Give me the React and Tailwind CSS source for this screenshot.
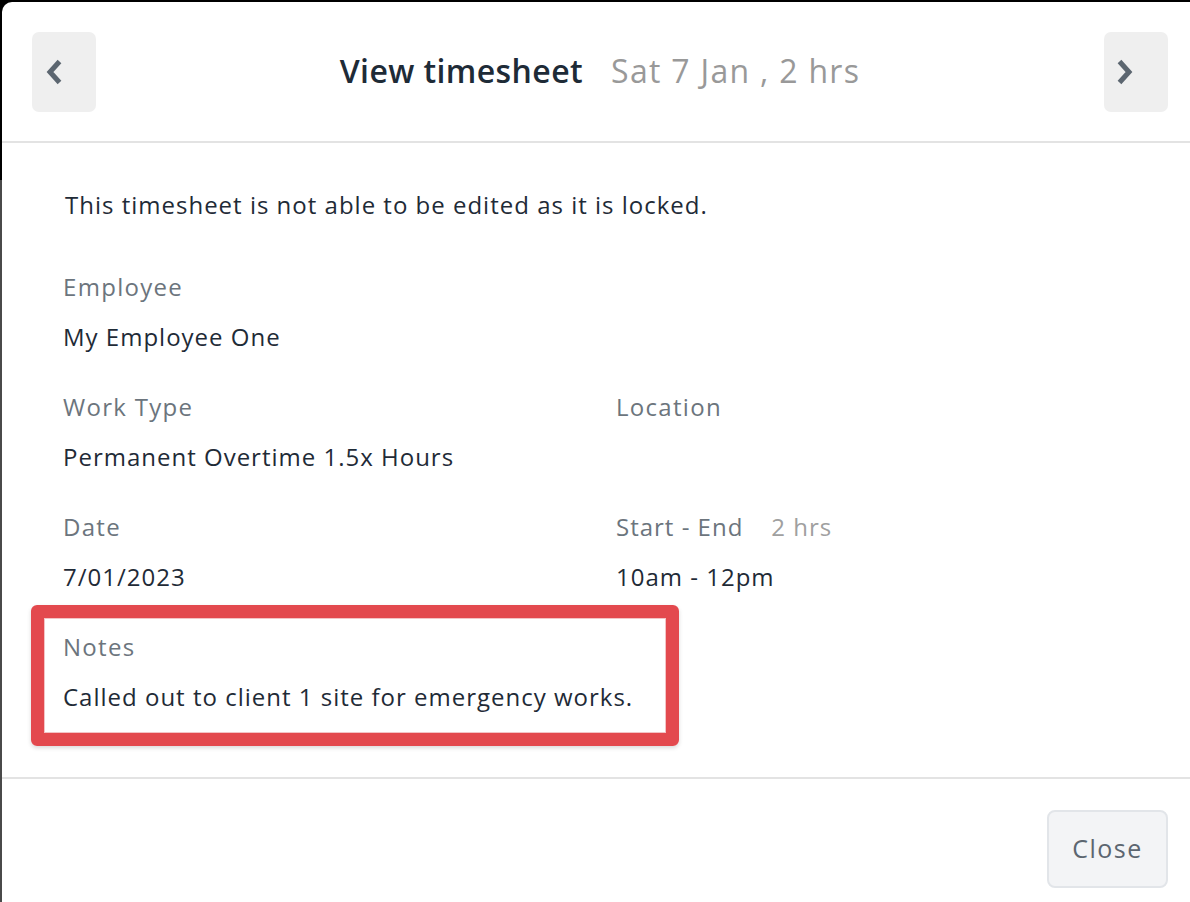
export default function App() {
  const font = { fontFamily: '"Open Sans", Lato, sans-serif' };
  return (
    <div className="w-[1190px] h-[902px] bg-black flex overflow-hidden" style={font}>
      <div className="w-[2px] flex flex-col shrink-0">
        <div className="h-[180px] bg-black" />
        <div className="flex-1 bg-[#4a4a4a]" />
      </div>
      <div className="flex-1 mt-[2px] bg-white rounded-tl-[10px] flex flex-col">
        {/* Header */}
        <div className="h-[141px] flex items-start justify-between pt-[30px] pl-[30px] pr-[22px] border-b-2 border-[#e3e3e3]">
          <button className="w-[64px] h-[80px] bg-[#efefef] rounded-[7px] flex items-center pl-[12px]">
            <svg width="20" height="28" viewBox="0 0 20 28">
              <path d="M15.5 3.5 L6 14 L15.5 24.5" fill="none" stroke="#5c6670" strokeWidth="5" strokeLinejoin="miter" strokeLinecap="butt" />
            </svg>
          </button>
          <div className="flex gap-[28px] h-[80px] items-center pb-[2px]">
            <span className="text-[32px] font-semibold text-[#1e2b37] leading-none tracking-[0.4px]">View timesheet</span>
            <span className="text-[32px] text-[#999999] leading-none tracking-[1.3px]">Sat 7 Jan , 2 hrs</span>
          </div>
          <button className="w-[64px] h-[80px] bg-[#efefef] rounded-[7px] flex items-center pl-[11px]">
            <svg width="20" height="28" viewBox="0 0 20 28">
              <path d="M4.5 3.5 L14 14 L4.5 24.5" fill="none" stroke="#5c6670" strokeWidth="5" strokeLinejoin="miter" strokeLinecap="butt" />
            </svg>
          </button>
        </div>
        {/* Body */}
        <div className="pt-[47px] pl-[61px] pb-[65px] text-[24px] leading-[30px] tracking-[1px]">
          <p className="pl-[2px] text-[#1f2b37]">This timesheet is not able to be edited as it is locked.</p>
          <div className="mt-[52px] grid grid-cols-[553px_1fr] gap-y-[40px]">
            <div className="col-span-2">
              <div className="text-[#6c757d] tracking-[1.3px]">Employee</div>
              <div className="mt-[20px] text-[#1f2b37]">My Employee One</div>
            </div>
            <div>
              <div className="text-[#6c757d] tracking-[1.3px]">Work Type</div>
              <div className="mt-[20px] text-[#1f2b37]">Permanent Overtime 1.5x Hours</div>
            </div>
            <div>
              <div className="text-[#6c757d] tracking-[1.3px]">Location</div>
            </div>
            <div>
              <div className="text-[#6c757d] tracking-[1.3px]">Date</div>
              <div className="mt-[20px] text-[#1f2b37]">7/01/2023</div>
            </div>
            <div>
              <div className="text-[#6c757d] flex gap-[28px]">
                <span>Start - End</span>
                <span className="text-[#a0a0a0]">2 hrs</span>
              </div>
              <div className="mt-[20px] text-[#1f2b37]">10am - 12pm</div>
            </div>
            <div className="col-span-2 relative">
              <div className="absolute left-[-32px] top-[-27px] w-[648px] h-[141px] border-[13px] border-[#e3494e] rounded-[6px] shadow-[0_2px_4px_rgba(0,0,0,0.15)]">
                <div className="w-full h-full border border-[#f3c4c6]" />
              </div>
              <div className="relative text-[#6c757d] tracking-[1.3px]">Notes</div>
              <div className="relative mt-[20px] text-[#1f2b37]">Called out to client 1 site for emergency works.</div>
            </div>
          </div>
        </div>
        {/* Footer */}
        <div className="border-t-2 border-[#e3e3e3] flex justify-end pt-[31px] pr-[22px] flex-1">
          <button className="w-[121px] h-[78px] bg-[#f3f4f6] border-2 border-[#e2e5e9] rounded-[8px] text-[25px] tracking-[1.5px] text-[#5c6670]">
            Close
          </button>
        </div>
      </div>
    </div>
  );
}
